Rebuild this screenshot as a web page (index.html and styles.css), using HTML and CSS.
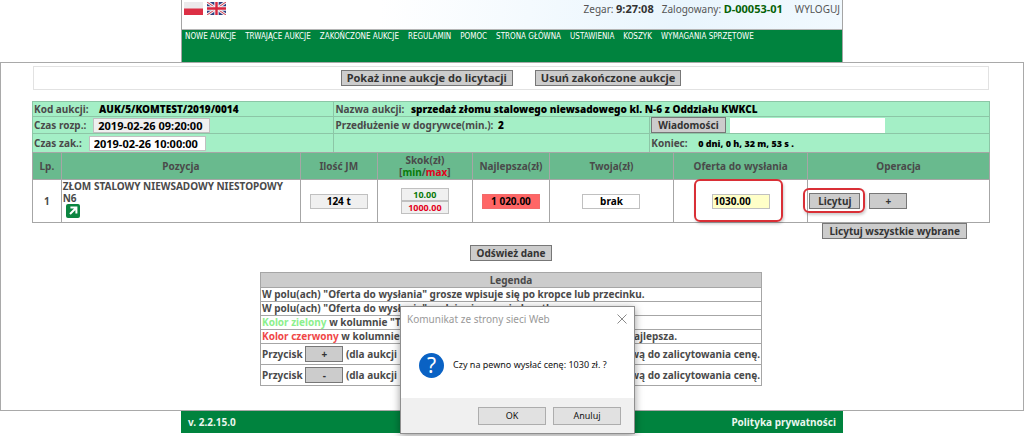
FILE: index.html
```html
<!DOCTYPE html>
<html lang="pl">
<head>
<meta charset="utf-8">
<title>Aukcje</title>
<link rel="stylesheet" href="styles.css">
</head>
<body>
<header class="site-header">
  <div class="top-bar">
    <div class="flags">
      <svg class="flag" viewBox="0 0 19 13" role="img" aria-label="Polski"><rect width="19" height="13" fill="#eceaec"/><rect y="6.5" width="19" height="6.5" fill="#dc2f45"/></svg>
      <svg class="flag" viewBox="0 0 19 13" role="img" aria-label="English"><rect width="19" height="13" fill="#2b3f82"/><path d="M0 0L19 13M19 0L0 13" stroke="#eee" stroke-width="3"/><path d="M0 0L19 13M19 0L0 13" stroke="#d43a50" stroke-width="1"/><path d="M9.5 0V13M0 6.5H19" stroke="#f4f0f4" stroke-width="4.4"/><path d="M9.5 0V13M0 6.5H19" stroke="#d8263e" stroke-width="2.4"/></svg>
    </div>
    <div class="session">
      <span>Zegar: <b class="clock">9:27:08</b></span>
      <span>Zalogowany: <b class="user">D-00053-01</b></span>
      <a class="logout" href="#">WYLOGUJ</a>
    </div>
  </div>
  <nav class="nav">
    <a href="#">NOWE AUKCJE</a><a href="#">TRWAJĄCE AUKCJE</a><a href="#">ZAKOŃCZONE AUKCJE</a><a href="#">REGULAMIN</a><a href="#">POMOC</a><a href="#">STRONA GŁÓWNA</a><a href="#">USTAWIENIA</a><a href="#">KOSZYK</a><a href="#">WYMAGANIA SPRZĘTOWE</a>
  </nav>
</header>

<main class="panel">
  <div class="toolbar">
    <button class="btn btn-large">Pokaż inne aukcje do licytacji</button>
    <button class="btn btn-large">Usuń zakończone aukcje</button>
  </div>

  <table class="grid details">
    <colgroup><col class="d-a"><col class="d-b"><col class="d-c"></colgroup>
    <tr class="row-code">
      <td>Kod aukcji: <b class="value code">AUK/5/KOMTEST/2019/0014</b></td>
      <td colspan="2">Nazwa aukcji: <b class="value title">sprzedaż złomu stalowego niewsadowego kl. N-6 z Oddziału KWKCL</b></td>
    </tr>
    <tr class="row-start">
      <td><div class="time"><label for="start">Czas rozp.:</label><input id="start" class="field date" readonly value="2019-02-26 09:20:00"></div></td>
      <td>Przedłużenie w dogrywce(min.): <b class="value near">2</b></td>
      <td><div class="messages"><button class="btn">Wiadomości</button><input class="field message" aria-label="Wiadomość"></div></td>
    </tr>
    <tr class="row-end">
      <td><div class="time"><label for="end">Czas zak.:</label><input id="end" class="field date light" readonly value="2019-02-26 10:00:00"></div></td>
      <td></td>
      <td>Koniec: <b class="value countdown">0 dni, 0 h, 32 m, 53 s .</b></td>
    </tr>
  </table>

  <table class="grid items">
    <colgroup><col class="c-no"><col class="c-name"><col class="c-qty"><col class="c-step"><col class="c-best"><col class="c-own"><col class="c-offer"><col class="c-op"></colgroup>
    <thead>
      <tr><th>Lp.</th><th>Pozycja</th><th>Ilość JM</th><th>Skok(zł)<br>[<span class="min">min</span>/<span class="max">max</span>]</th><th>Najlepsza(zł)</th><th>Twoja(zł)</th><th>Oferta do wysłania</th><th>Operacja</th></tr>
    </thead>
    <tbody>
      <tr>
        <td class="center">1</td>
        <td class="name">ZŁOM STALOWY NIEWSADOWY NIESTOPOWY N6
          <a class="open" href="#" aria-label="Otwórz pozycję"><svg viewBox="0 0 14 14"><rect width="14" height="14" rx="2" fill="#0b8540"/><path d="M4.4 3.6H10.4V9.6M10 4L4 10" fill="none" stroke="#fff" stroke-width="2"/></svg></a>
        </td>
        <td class="center"><input class="field cell" aria-label="Ilość" readonly value="124 t"></td>
        <td class="center"><div class="steps"><input class="field step min" aria-label="Skok min" readonly value="10.00"><input class="field step max" aria-label="Skok max" readonly value="1000.00"></div></td>
        <td class="center"><input class="field cell best" aria-label="Najlepsza" readonly value="1 020.00"></td>
        <td class="center"><input class="field cell light" aria-label="Twoja" readonly value="brak"></td>
        <td class="center"><div class="marked mark-offer"><input class="field cell offer" aria-label="Oferta do wysłania" value="1030.00"></div></td>
        <td><div class="ops"><span class="marked mark-bid"><button class="btn btn-bid">Licytuj</button></span><button class="btn btn-sign">+</button></div></td>
      </tr>
    </tbody>
  </table>

  <div class="bid-all"><button class="btn">Licytuj wszystkie wybrane</button></div>
  <div class="refresh"><button class="btn">Odśwież dane</button></div>

  <table class="grid legend">
    <tr><th>Legenda</th></tr>
    <tr><td>W polu(ach) "Oferta do wysłania" grosze wpisuje się po kropce lub przecinku.</td></tr>
    <tr><td>W polu(ach) "Oferta do wysłania" podaje się cenę jednostkową.</td></tr>
    <tr><td><span class="green">Kolor zielony</span> w kolumnie "Twoja"</td></tr>
    <tr><td><div class="split"><span><span class="red">Kolor czerwony</span> w kolumnie</span><span class="tail-best">najlepsza.</span></div></td></tr>
    <tr class="tall"><td><div class="split"><span>Przycisk <button class="btn btn-sign">+</button> (dla aukcji</span><span>możliwą do zalicytowania cenę.</span></div></td></tr>
    <tr class="tall"><td><div class="split"><span>Przycisk <button class="btn btn-sign">-</button> (dla aukcji</span><span>możliwą do zalicytowania cenę.</span></div></td></tr>
  </table>
</main>

<footer class="site-footer"><span>v. 2.2.15.0</span><a href="#">Polityka prywatności</a></footer>

<div class="dialog" role="dialog" aria-labelledby="dialog-title">
  <div class="dialog-head">
    <span id="dialog-title">Komunikat ze strony sieci Web</span>
    <button class="close" aria-label="Zamknij"><svg viewBox="0 0 10 10"><path d="M.5 .5L9.5 9.5M9.5 .5L.5 9.5" stroke="#8a8a8a" fill="none"/></svg></button>
  </div>
  <div class="dialog-body">
    <span class="question" aria-hidden="true">?</span>
    <span>Czy na pewno wysłać cenę: 1030 zł. ?</span>
  </div>
  <div class="dialog-foot"><button class="dlg-btn">OK</button><button class="dlg-btn">Anuluj</button></div>
</div>
</body>
</html>
```
FILE: styles.css
```css
* { box-sizing: border-box; }

body {
  margin: 0;
  background: #fff;
  color: #4a4a4a;
  font: bold 10px/14px "Noto Sans", "Open Sans", sans-serif;
}

a { color: inherit; text-decoration: none; }

button, input { font: inherit; margin: 0; }

.site-header, .site-footer {
  width: 100%;
  max-width: 662px;
  margin: 0 auto;
}

.site-header { border: solid #a5a5a5; border-width: 0 1px; }

.top-bar {
  display: flex;
  justify-content: space-between;
  height: 30px;
  padding: 2px 2px 0;
  border-bottom: 1px solid #b5b5b5;
  background: linear-gradient(100deg, #fff 30%, #e9f5fd 75%, #f1f9fe);
  font-weight: normal;
  color: #555;
}

.flags { display: flex; gap: 4px; }
.flag { width: 19px; height: 13px; }

.session { display: flex; gap: 8px; }
.clock { color: #333; font-size: 11px; }
.user { color: #056105; font-size: 11px; }
.logout { padding-left: 4px; }

.nav {
  display: flex;
  flex-wrap: wrap;
  align-content: flex-start;
  gap: 0 9px;
  min-height: 32px;
  padding: 0 3px;
  background: #00833e;
  color: #fff;
  font-family: "DejaVu Sans Condensed", "DejaVu Sans", sans-serif;
  font-size: 8px;
  font-weight: normal;
}

.panel {
  padding: 3px 33px 24px 31px;
  border: 1px solid #a9a9a9;
  background: #fff;
}

.toolbar {
  display: flex;
  justify-content: center;
  gap: 22px;
  margin: 0 1px 11px;
  padding: 3px 0;
  border: 1px solid #e2e2e2;
}

.btn {
  height: 16px;
  padding: 0 6px;
  border: 1px solid #777;
  background: #ccc;
  color: #333;
  line-height: 14px;
}
.btn-large { padding: 0 5px; font-size: 11px; }
.btn-sign { width: 38px; padding: 0; }
.btn-bid { padding: 0 8px; }

.grid {
  width: 100%;
  border-collapse: collapse;
  table-layout: fixed;
}
.grid td, .grid th { padding: 0 1px; border: 1px solid #a6a6a6; white-space: nowrap; }

.details { background: #a4efc6; }
.details td { border-color: #8cc6a6; }
.d-a { width: 31.5%; }
.d-b { width: 33%; }
.d-c { width: 35.5%; }
.row-start { height: 17px; }
.row-end { height: 19px; }

.value { margin-left: 8px; color: #000; }
.title { margin-left: 4px; }
.near { margin-left: 2px; }
.countdown { font-size: 9px; }

.field {
  height: 15px;
  padding: 0 4px;
  border: 1px solid #c0c0c0;
  border-radius: 0;
  background: #f0f0f0;
  color: #000;
  vertical-align: middle;
}
.time { display: flex; align-items: center; gap: 7px; }
.date { width: 117px; padding: 0 4px; font-size: 11px; }
.light { background: #fff; }
.messages { display: flex; align-items: center; gap: 4px; }
.message { width: 155px; border: 0; background: #fff; }

.items { margin-top: -1px; }
.items th { height: 27px; line-height: 12px; background: #69ba8e; }
.items td { height: 43px; }
.grid .center { text-align: center; }
.c-no { width: 3%; }
.c-name { width: 25%; }
.c-qty { width: 8%; }
.c-step { width: 10%; }
.c-best { width: 8%; }
.c-own { width: 13%; }
.c-offer { width: 14%; }
.c-op { width: 19%; }

.grid .name { line-height: 12px; white-space: normal; vertical-align: top; }
.open { display: block; width: 14px; height: 14px; margin-left: 3px; }
.open svg { display: block; }

.min { color: #0a7a0a; }
.max { color: #e3001b; }
.steps { display: flex; flex-direction: column; align-items: center; }
.step { width: 48px; height: 13px; font-size: 9px; text-align: center; }
.step.min { color: #0a7a0a; }
.step.max { color: #e3001b; }
.cell { width: 58px; text-align: center; }
.cell.best { border-color: #f26a6a; background: #ff6666; }
.cell.offer { padding: 0 1px; background: #ffffc8; text-align: left; }

.marked { position: relative; display: inline-block; }
.marked::after {
  content: "";
  position: absolute;
  border: 2px solid #d92f36;
  border-radius: 6px;
  box-shadow: 1px 2px 3px #0003;
  pointer-events: none;
}
.mark-offer::after { inset: -14px -13px -13px -18px; }
.mark-bid::after { inset: -5px -5px -4px -6px; }
.ops { display: flex; align-items: center; gap: 9px; }

.bid-all { display: flex; justify-content: flex-end; padding-right: 23px; }
.refresh { display: flex; justify-content: center; margin: 6px 0 11px; }

.legend { max-width: 502px; margin: 0 auto; }
.legend th { height: 15px; background: #ccc; }
.legend td { height: 14px; line-height: 13px; }
.legend .tall td { height: 21px; }
.split { display: flex; justify-content: space-between; align-items: center; }
.tail-best { padding-right: 83px; }
.green { color: #8cf08c; }
.red { color: #f04848; }

.site-footer {
  display: flex;
  justify-content: space-between;
  align-items: center;
  height: 22px;
  padding: 0 7px;
  background: #00833e;
  color: #eaf6ee;
}

.dialog {
  position: absolute;
  top: 306px;
  left: calc(50% - 112px);
  width: 235px;
  border: 1px solid #8f8f8f;
  background: #fff;
  box-shadow: 0 2px 8px #0006;
  color: #111;
  font-weight: normal;
}
.dialog-head {
  display: flex;
  justify-content: space-between;
  align-items: center;
  height: 23px;
  padding: 0 7px 0 6px;
  color: #999;
}
.close { width: 10px; height: 10px; padding: 0; border: 0; background: none; }
.close svg { display: block; }
.dialog-body {
  display: flex;
  align-items: center;
  gap: 9px;
  height: 68px;
  padding: 2px 18px 0;
  font-size: 9px;
}
.question {
  width: 25px;
  height: 25px;
  border-radius: 50%;
  background: #0a62c4;
  color: #fff;
  font: 21px/25px "Noto Sans", sans-serif;
  text-align: center;
}
.dialog-foot {
  display: flex;
  justify-content: flex-end;
  gap: 7px;
  padding: 9px 13px 8px;
  background: #f0f0f0;
}
.dlg-btn {
  width: 68px;
  height: 18px;
  padding: 0;
  border: 1px solid #adadad;
  background: #e1e1e1;
  color: #111;
  font-size: 9px;
  line-height: 16px;
}
```
